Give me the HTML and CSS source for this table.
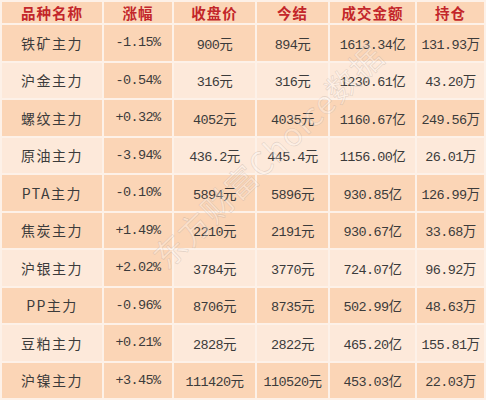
FILE: index.html
```html
<!DOCTYPE html>
<html lang="zh-CN">
<head>
<meta charset="utf-8">
<title>期货主力合约</title>
<link rel="stylesheet" href="styles.css">
</head>
<body>
<div class="wrap">
<table class="quotes">
  <colgroup>
    <col class="c1"><col class="c2"><col class="c3"><col class="c4"><col class="c5"><col class="c6">
  </colgroup>
  <thead>
    <tr class="dark"><th>品种名称</th><th>涨幅</th><th>收盘价</th><th>今结</th><th>成交金额</th><th>持仓</th></tr>
  </thead>
  <tbody>
    <tr class="dark"><td class="name">铁矿主力</td><td>-1.15%</td><td>900元</td><td>894元</td><td>1613.34亿</td><td>131.93万</td></tr>
    <tr class="light"><td class="name">沪金主力</td><td>-0.54%</td><td>316元</td><td>316元</td><td>1230.61亿</td><td>43.20万</td></tr>
    <tr class="dark"><td class="name">螺纹主力</td><td>+0.32%</td><td>4052元</td><td>4035元</td><td>1160.67亿</td><td>249.56万</td></tr>
    <tr class="light"><td class="name">原油主力</td><td>-3.94%</td><td>436.2元</td><td>445.4元</td><td>1156.00亿</td><td>26.01万</td></tr>
    <tr class="dark"><td class="name">PTA主力</td><td>-0.10%</td><td>5894元</td><td>5896元</td><td>930.85亿</td><td>126.99万</td></tr>
    <tr class="dark"><td class="name">焦炭主力</td><td>+1.49%</td><td>2210元</td><td>2191元</td><td>930.67亿</td><td>33.68万</td></tr>
    <tr class="light"><td class="name">沪银主力</td><td>+2.02%</td><td>3784元</td><td>3770元</td><td>724.07亿</td><td>96.92万</td></tr>
    <tr class="dark"><td class="name">PP主力</td><td>-0.96%</td><td>8706元</td><td>8735元</td><td>502.99亿</td><td>48.63万</td></tr>
    <tr class="light"><td class="name">豆粕主力</td><td>+0.21%</td><td>2828元</td><td>2822元</td><td>465.20亿</td><td>155.81万</td></tr>
    <tr class="dark"><td class="name">沪镍主力</td><td>+3.45%</td><td>111420元</td><td>110520元</td><td>453.03亿</td><td>22.03万</td></tr>
  </tbody>
</table>
<div class="watermark">东方财富Choice数据</div>
</div>
</body>
</html>
```
FILE: styles.css
```css
html, body {
  margin: 0;
  padding: 0;
  background: #fbf3ec;
}
.wrap {
  position: relative;
  width: 486px;
  height: 400px;
  overflow: hidden;
}
.quotes {
  width: 484px;
  height: 400px;
  border-collapse: collapse;
  table-layout: fixed;
  font-family: "Liberation Mono", "Noto Sans CJK SC", monospace;
  font-size: 13.5px;
  letter-spacing: -0.6px;
  color: #3b3b3b;
}
.c1 { width: 102px; }
.c2 { width: 70px; }
.c3 { width: 83px; }
.c4 { width: 73px; }
.c5 { width: 87px; }
.c6 { width: 69px; }
.quotes th, .quotes td {
  border: 2px solid #fdf1e8;
  text-align: center;
  padding: 0;
  white-space: nowrap;
}
.quotes th {
  font-family: "Noto Sans CJK SC", sans-serif;
  font-weight: 700;
  font-size: 14.5px;
  letter-spacing: 1px;
  color: #c3262a;
}
.quotes td.name {
  font-family: "Noto Sans CJK SC", sans-serif;
  font-size: 14px;
  letter-spacing: 1.5px;
}
.dark th, .dark td { background: #fbd5b6; }
.light td { background: #fde9da; }
.light td:nth-child(2) { background: #fbd5b6; }
.watermark {
  position: absolute;
  left: 267px;
  top: 155px;
  font-family: "Noto Sans CJK SC", sans-serif;
  font-size: 32px;
  letter-spacing: 1px;
  color: rgba(255, 255, 255, 0.3);
  -webkit-text-stroke: 0.6px rgba(160, 140, 130, 0.3);
  transform: translate(-50%, -50%) rotate(-44deg);
  white-space: nowrap;
  pointer-events: none;
}
```
